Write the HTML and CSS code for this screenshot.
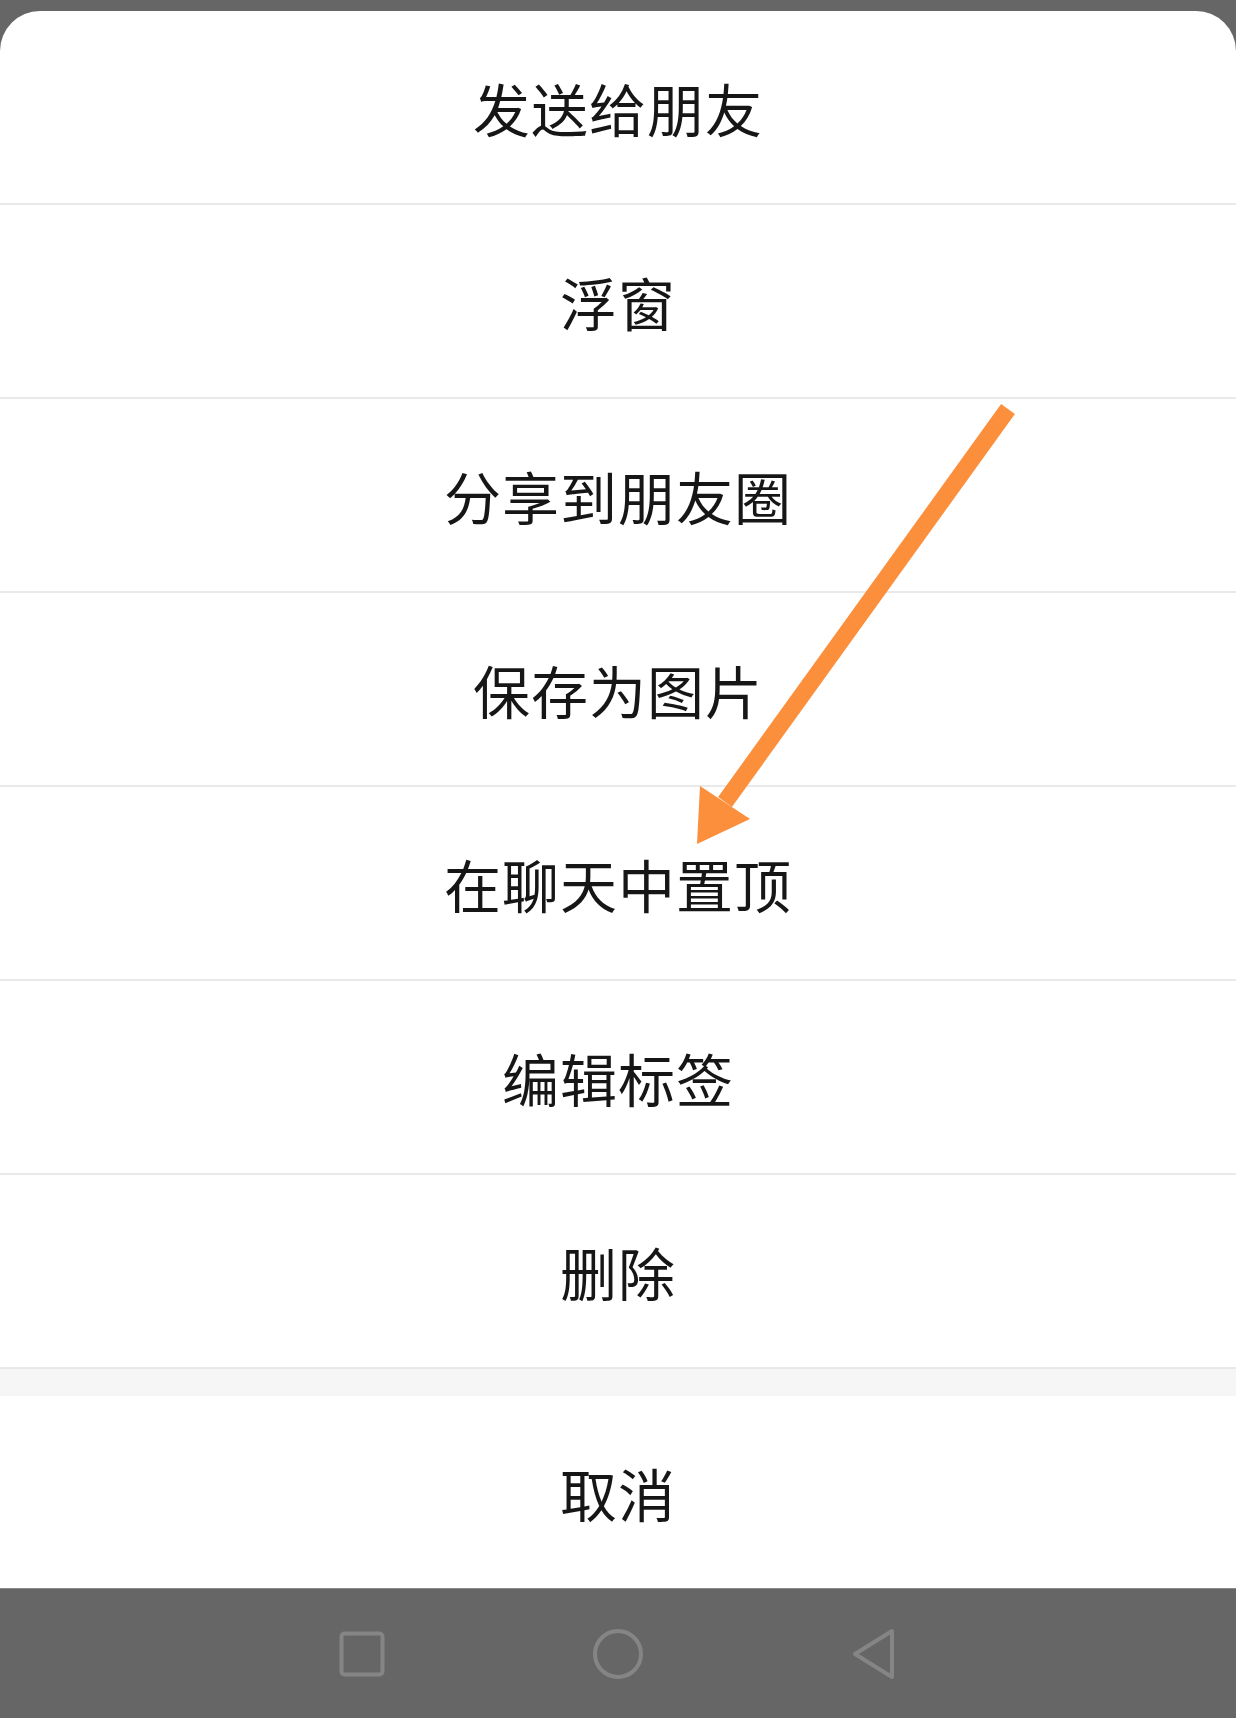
FILE: index.html
```html
<!DOCTYPE html>
<html lang="zh-CN">
<head>
<meta charset="utf-8">
<title>Action sheet</title>
<link rel="stylesheet" href="styles.css">
</head>
<body>
<div class="screen">
  <div class="topbar"></div>
  <div class="sheet">
    <div class="item">发送给朋友</div>
    <div class="item">浮窗</div>
    <div class="item">分享到朋友圈</div>
    <div class="item">保存为图片</div>
    <div class="item">在聊天中置顶</div>
    <div class="item">编辑标签</div>
    <div class="item">删除</div>
    <div class="gap"></div>
    <div class="item cancel">取消</div>
  </div>
  <div class="navbar">
    <div class="nav-slot">
      <svg width="46" height="46" viewBox="0 0 46 46"><rect x="2.5" y="2.5" width="41" height="41" rx="3" fill="none" stroke="#858585" stroke-width="4"/></svg>
    </div>
    <div class="nav-slot">
      <svg width="52" height="52" viewBox="0 0 52 52"><circle cx="26" cy="26" r="23" fill="none" stroke="#858585" stroke-width="4"/></svg>
    </div>
    <div class="nav-slot">
      <svg width="46" height="52" viewBox="0 0 46 52"><path d="M41 3 L41 49 L4 26 Z" fill="none" stroke="#858585" stroke-width="4" stroke-linejoin="round"/></svg>
    </div>
  </div>
  <svg class="arrow" width="1236" height="1718" viewBox="0 0 1236 1718">
    <line x1="1008" y1="409" x2="725" y2="802" stroke="#fb8f3c" stroke-width="17"/>
    <polygon points="697,844 700,786 750,819" fill="#fb8f3c"/>
  </svg>
</div>
</body>
</html>
```
FILE: styles.css
```css
html, body {
  margin: 0;
  padding: 0;
}
body {
  background: #666666;
  font-family: "Noto Sans CJK SC", "Noto Sans", sans-serif;
}
.screen {
  position: relative;
  width: 1236px;
  height: 1718px;
  overflow: hidden;
  display: flex;
  flex-direction: column;
}
.topbar {
  height: 11px;
  background: #666666;
  flex: none;
}
.sheet {
  background: #ffffff;
  border-radius: 40px 40px 0 0;
  display: flex;
  flex-direction: column;
  flex: none;
}
.item {
  height: 192px;
  border-bottom: 2px solid #e9e9e9;
  display: flex;
  align-items: center;
  justify-content: center;
  font-size: 57px;
  font-weight: 400;
  color: #161616;
  letter-spacing: 1px;
}
.gap {
  height: 27px;
  background: #f6f6f6;
}
.item.cancel {
  border-bottom: none;
  height: 192px;
}
.navbar {
  flex: 1;
  background: #666666;
  border-top: 1px solid #8a8a8a;
  display: flex;
  align-items: center;
  justify-content: center;
}
.nav-slot {
  width: 256px;
  display: flex;
  align-items: center;
  justify-content: center;
}
.nav-slot svg {
  display: block;
}
.arrow {
  position: absolute;
  left: 0;
  top: 0;
  pointer-events: none;
}
```
